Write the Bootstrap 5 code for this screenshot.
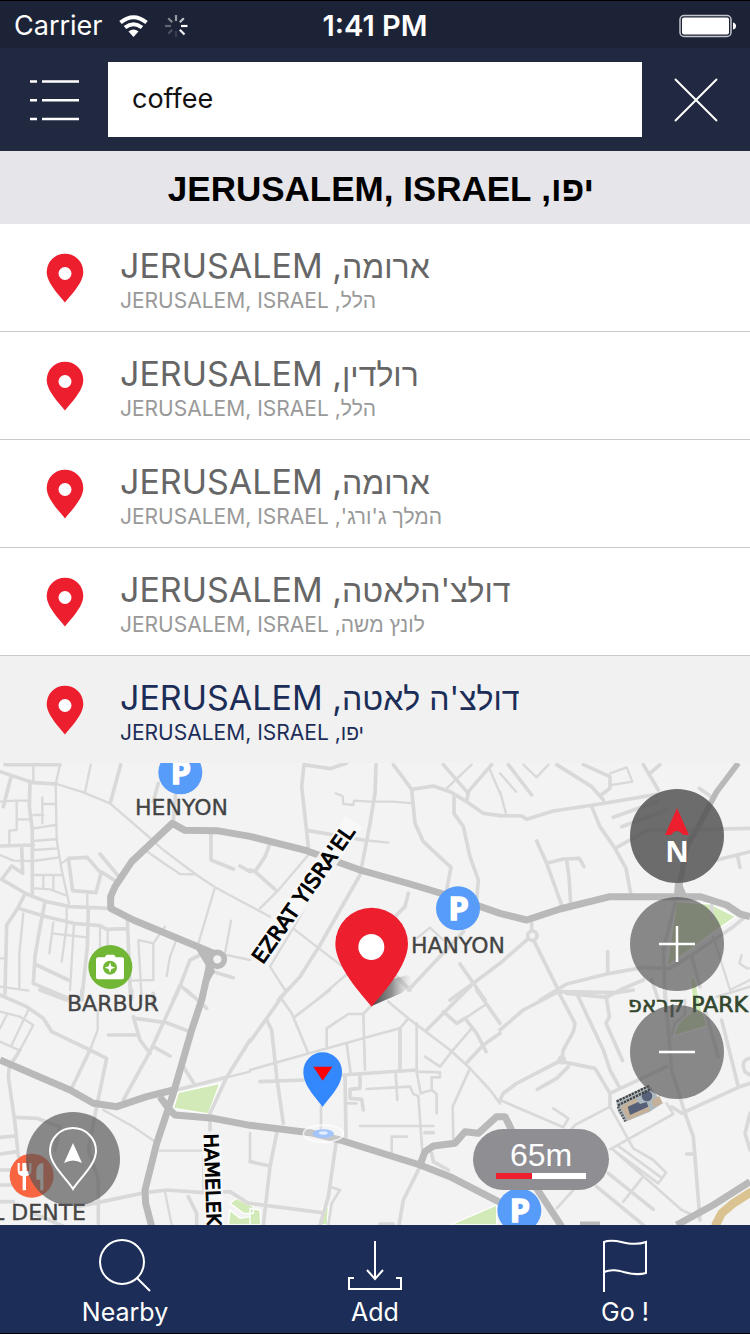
<!DOCTYPE html>
<html lang="en">
<head>
<meta charset="utf-8">
<meta name="viewport" content="width=device-width, initial-scale=1">
<title>Coffee – Jerusalem</title>
<link href="https://cdn.jsdelivr.net/npm/bootstrap@5.3.0/dist/css/bootstrap.min.css" rel="stylesheet">
<style>
  body { font-family: Inter, "Liberation Sans", sans-serif; background: #f3f3f3; }
  svg { display: block; }
  .status-bar { background: #1c2336; border-top: 1px solid #000; height: 48px; padding: 2px 14px 0; font-size: 27px; line-height: 32px; color: #fff; }
  .status-time { font-size: 29px; font-weight: 600; }
  .search-bar { background: #20293f; padding: 14px 0; }
  .bar-btn { flex: 0 0 108px; border: 0; background: none; color: #fff; padding: 0; display: flex; align-items: center; justify-content: center; }
  .search-input { height: 75px; border: 0; border-radius: 0; font-size: 27px; padding: 0 24px 2px; color: #111; }
  .place-heading { background: #e6e5ea; height: 73px; font: 700 35px/75px "Liberation Sans", sans-serif; color: #000; padding-left: 12px; }
  .result { display: flex; align-items: center; height: 108px; padding: 0 46px; border: 0; border-bottom: 1px solid #c9c9c9; text-align: left; }
  .result:last-child { border-bottom: 0; height: 107px; }
  .result svg { flex: none; margin-right: 36px; }
  .result-text { padding-top: 6px; }
  .result-title { font-size: 34px; line-height: 40px; color: #666; text-align: left; }
  .result-title bdi { font-size: 32px; }
  .result-sub { font-size: 21px; line-height: 28px; color: #999; text-align: left; }
  .result.selected { background: #f1f1f1; }
  .result.selected .result-title, .result.selected .result-sub { color: #1c2d58; }
  .map-area { flex: 1 0 462px; overflow: hidden; }
  .map-canvas { position: absolute; inset: 0; width: 100%; height: 100%; }
  .map-label { font-family: "DejaVu Sans", sans-serif; font-size: 66px; fill: #444; stroke: #444; stroke-width: 1px; }
  .park-label { fill: #33472f; stroke: #33472f; stroke-width: 2px; }
  .road-label { font-family: "DejaVu Sans", sans-serif; fill: #000; stroke: #000; stroke-width: 3px; }
  .road-halo { stroke: #f8f8f8; stroke-width: 17px; stroke-linejoin: round; }
  .map-p { font: 700 98px "Noto Sans", sans-serif; fill: #fff; stroke: #fff; stroke-width: 4px; text-anchor: middle; }
  .map-tools { position: absolute; top: 26px; right: 26px; display: flex; flex-direction: column; gap: 14px; }
  .round-btn { width: 94px; height: 94px; border: 0; border-radius: 50%; padding: 0; background: rgba(85,85,85,.68); color: #fff; }
  .north-btn { background: rgba(85,85,85,.86); font: 700 29px/29px "Noto Sans", sans-serif; }
  .locate-btn { position: absolute; left: 26px; bottom: 19px; }
  .scale-pill { position: absolute; right: 141px; bottom: 35px; width: 136px; height: 61px; border-radius: 31px; background: #8f8e93; color: #fff; font: 32px/36px "Liberation Sans", sans-serif; padding-top: 8px; text-align: center; }
  .scale-line { width: 90px; height: 6px; margin: 0 auto; background: #fff; }
  .scale-line span { display: block; width: 40%; height: 6px; background: #ed1f2f; }
  .tab-bar { background: #1c2d58; height: 109px; border-bottom: 1px solid #000; }
  .tab-bar a { color: #fff; text-decoration: none; font-size: 25px; line-height: 30px; padding-top: 13px; }
  .tab-bar svg { margin: 0 auto 5px; }
</style>
</head>
<body class="min-vh-100 d-flex flex-column">
<svg width="0" height="0" class="position-absolute" aria-hidden="true">
  <symbol id="pin" viewBox="0 0 38 50"><path d="M19 49.500C14 43 .700 30 .700 19A18.300 18.300 0 0 1 37.300 19C37.300 30 24 43 19 49.500Z" fill="#ed1f2f"/><circle cx="19" cy="20.500" r="6.500" fill="#fff"/></symbol>
</svg>

<header>
  <div class="status-bar row g-0 align-items-center flex-nowrap">
    <div class="col d-flex align-items-center">
      <span>Carrier</span>
      <svg class="ms-3" width="29" height="22" viewBox="0 0 29 22" fill="none" stroke="#fff" stroke-width="4"><path d="M1.500 7.500Q14.500-3 27.500 7.500M6 12.500Q14.500 6 23 12.500"/><path d="M14.500 22L9.500 16.500Q14.500 12.500 19.500 16.500Z" fill="#fff" stroke="none"/></svg>
      <svg class="ms-3" width="24" height="24" viewBox="-12 -12 24 24" stroke="#fff" stroke-width="2.200"><path d="M0-11V-5" opacity=".55"/><path d="M7.800-7.800L3.800-3.800" opacity=".75"/><path d="M5 0H11.500"/><path d="M3.800 3.800L8.500 8.500" opacity=".95"/><path d="M0 5V11" opacity=".12"/><path d="M-3.800 3.800L-7.800 7.800" opacity=".2"/><path d="M-5 0H-11" opacity=".3"/><path d="M-3.800-3.800L-7.800-7.800" opacity=".45"/></svg>
    </div>
    <div class="col-auto status-time">1:41 PM</div>
    <div class="col d-flex justify-content-end">
      <svg width="58" height="24" viewBox="0 0 58 24"><rect x="2" y="1.500" width="51" height="21" rx="4" fill="none" stroke="#c3c6cc" stroke-width="1.500"/><rect x="4" y="3.500" width="47" height="17" rx="2" fill="#fff"/><path d="M55 8.500Q58 9 58 12T55 15.500Z" fill="#fff"/></svg>
    </div>
  </div>
  <form class="search-bar d-flex">
    <button type="button" class="bar-btn" aria-label="Menu"><svg width="50" height="42" viewBox="0 0 50 42" stroke="#fff" stroke-width="2.400"><path d="M1 2.500H8M13 2.500H50M1 21.200H8M13 21.200H50M1 40H8M13 40H50"/></svg></button>
    <input class="form-control search-input" type="text" value="coffee" aria-label="Search">
    <button type="button" class="bar-btn" aria-label="Clear search"><svg width="44" height="44" viewBox="0 0 44 44" stroke="#fff" stroke-width="2"><path d="M1 1L43 43M43 1L1 43"/></svg></button>
  </form>
</header>

<main class="d-flex flex-column flex-grow-1">
  <h1 class="place-heading m-0 text-center" dir="rtl">יפו, JERUSALEM, ISRAEL</h1>
  <div class="list-group list-group-flush">
    <a href="#" class="result list-group-item"><svg width="38" height="50"><use href="#pin"/></svg><div class="result-text"><div class="result-title" dir="rtl"><bdi>ארומה</bdi>, JERUSALEM</div><div class="result-sub" dir="rtl">הלל, JERUSALEM, ISRAEL</div></div></a>
    <a href="#" class="result list-group-item"><svg width="38" height="50"><use href="#pin"/></svg><div class="result-text"><div class="result-title" dir="rtl"><bdi>רולדין</bdi>, JERUSALEM</div><div class="result-sub" dir="rtl">הלל, JERUSALEM, ISRAEL</div></div></a>
    <a href="#" class="result list-group-item"><svg width="38" height="50"><use href="#pin"/></svg><div class="result-text"><div class="result-title" dir="rtl"><bdi>ארומה</bdi>, JERUSALEM</div><div class="result-sub" dir="rtl">המלך ג'ורג', JERUSALEM, ISRAEL</div></div></a>
    <a href="#" class="result list-group-item"><svg width="38" height="50"><use href="#pin"/></svg><div class="result-text"><div class="result-title" dir="rtl"><bdi>דולצ'הלאטה</bdi>, JERUSALEM</div><div class="result-sub" dir="rtl">לונץ משה, JERUSALEM, ISRAEL</div></div></a>
    <a href="#" class="result list-group-item selected"><svg width="38" height="50"><use href="#pin"/></svg><div class="result-text"><div class="result-title" dir="rtl"><bdi>דולצ'ה לאטה</bdi>, JERUSALEM</div><div class="result-sub" dir="rtl">יפו, JERUSALEM, ISRAEL</div></div></a>
  </div>

  <section class="map-area position-relative" aria-label="Map">
    <svg class="map-canvas" viewBox="0 0 2250 1386" preserveAspectRatio="xMidYMid slice">
      <defs><linearGradient id="shade" x1="0" y1="0" x2="1" y2="0"><stop offset="0" stop-color="#444"/><stop offset=".5" stop-color="#777" stop-opacity=".8"/><stop offset="1" stop-color="#bbb" stop-opacity="0"/></linearGradient></defs>
      <rect width="2250" height="1386" fill="#f3f3f3"/>
      <!-- parks -->
      <g fill="#d2eab8" stroke="#fff" stroke-width="4">
        <path d="M2030 416L2130 423L2208 461L2150 501L2000 611Z"/>
        <path d="M2070 651L2085 641L2105 741L2122 789L2020 819L2035 781L2080 741Z"/>
        <path d="M535 988L660 961L625 1053L520 1036Z"/>
        <path d="M690 1321L710 1306L760 1330V1351H730ZM690 1341L720 1366L750 1361V1386H685ZM750 1336L780 1341L783 1386H750ZM968 1331H985L982 1386H960ZM1350 1386L1490 1326V1386Z"/>
      </g>
      <!-- side streets -->
      <g fill="none" stroke="#d9d9d9" stroke-width="11" stroke-linejoin="round" stroke-linecap="round">
        <g transform="translate(0 -9)">
          <path d="M0 35L100 68L170 72M15 14H180M32 55L10 140M90 68L88 140L97 210V400M0 258L100 255M65 262L68 340L35 318L5 358L80 402L140 425L210 440L330 445M205 295L262 292L303 340L288 398L218 392ZM300 282L355 348M303 335L350 365M362 14L332 125M475 70L460 125M527 100L520 180M633 220V300L700 327M720 318L750 335M75 402L50 450L20 495L15 700M135 425L115 530L105 590L100 670L205 715M110 615L205 660M265 450L262 560L245 720M600 585L570 600L545 665L520 720M545 680L575 705M640 635L700 653M460 700V740M382 480L392 720M55 445L130 468L220 490L300 497L320 508L380 506"/>
          <path stroke-width="7" d="M170 72L250 97L330 130L440 225L490 270L590 345L645 382L750 438M100 14V68M180 14L167 72L170 240L185 330L207 430M0 125L45 122H85M50 122V178H88M50 178V210L28 212V255M127 112V190M127 132H165M100 165H130M100 205L167 195M100 243L172 237M100 270L174 265M100 303L178 292M0 285L40 302L97 303M100 345H185M130 345V385M160 345V390M105 385L150 388L203 408M185 310L205 295M272 14L255 97M435 270L495 312L540 342L585 343M645 382L595 550M693 482L675 580M680 585L750 600M70 460L58 580V685M160 488L148 580M155 520L260 532M200 445V495L185 605M222 492L210 690M262 405V445M300 500V560M323 508V560M415 540L425 720M415 540L460 550V660L395 662M460 550L495 500M527 545L510 590L500 648M0 595H15M0 680L85 692"/>
        </g>
        <g transform="translate(750 -9)">
          <path d="M162 14L155 80L175 260M162 14L240 26L290 9M175 212L340 240M378 14L375 100L360 190L330 345L210 555L150 650L85 720M430 14L485 88L495 190L520 245L603 322L590 390M485 88L550 78L600 95L650 125L700 160L750 167M580 14L655 100M725 14L655 95L650 125M612 110V160L640 200L660 290L685 360L680 420M475 400L465 440L430 475M60 250L45 290L15 335L75 388M0 330L15 335M640 515L475 690M440 650L480 690M630 612L705 720M750 610L670 670L600 720"/>
          <path stroke-width="7" d="M340 240L415 248M257 100L278 108L280 132L310 135L312 122L360 125H430L490 130M590 85L665 14M720 30L750 100M175 285L90 385L30 445M0 438L60 470M110 490L200 560L285 625M300 635L200 720M220 350L120 520L90 570L60 620L105 690M500 535L540 503L580 540"/>
        </g>
        <g transform="translate(1500 -9)">
          <path d="M0 167L65 168L80 178L160 153L300 132L470 103M25 14L95 105M170 14L275 80L310 120M250 14L330 50V85L303 105M430 14L475 90M450 40L480 14M275 140L300 200L345 265L378 325L392 400M345 265L440 212L750 205M340 172L470 125M365 200L500 150M598 85L640 115M650 300L750 275M712 285L720 322M110 243L140 310L185 435M140 310L190 297L238 295L252 320M200 300L207 350L212 430M95 490V510M80 540L0 610M103 545L180 700M323 575V635M120 720L200 672L330 640L430 622L510 625L560 595L700 500L730 475M200 700L320 712L360 690L430 660M455 660L475 720M525 430L490 570L495 720M575 590L600 680M635 435V475"/>
          <circle cx="97" cy="527" r="14"/>
          <path stroke-width="7" d="M0 40L48 95M70 14L110 52L145 14M0 95L18 160M330 40L380 22L397 65L335 75M640 530L690 690M725 585L718 610L740 625H750M750 660L690 690"/>
        </g>
        <g transform="translate(0 681)">
          <path d="M0 15L80 50L130 85L155 125L270 180L320 205L290 350L265 480L295 570V700M100 670L205 715M120 0L200 30M270 180L215 295M60 180L28 230L25 260L45 400L55 500M325 135H415M400 80L420 150L450 190M405 85L500 98L570 125M535 0L450 185L370 330M460 170L510 198M395 0V25M560 0L620 55M550 230L585 285M530 300L680 262M750 150L680 262L630 370V420M50 382L110 385L180 410L165 480M0 442L45 438M0 492L50 485M0 540H40M0 585H40M0 635H40M235 650L435 608L500 600L610 608L690 605L745 640M565 620L590 670V705M245 0V30"/>
          <path stroke-width="7" d="M293 60V120L270 180M0 65L60 80L100 105L60 180M0 155L60 182M85 60L35 165M20 75L0 115M680 262L750 245M310 360L400 410L470 458M480 482H605M495 605L515 705M610 500V600"/>
        </g>
        <g transform="translate(750 681)">
          <path d="M110 0L50 85L0 155M50 90L65 120L80 260L100 400M450 115V240M30 275L160 270M275 255L500 240M285 255L288 440M530 120L660-10M580 65L620 100L645 85L680 130L708 185M680 0L750 100M750 130L700 165L650 218M330 255V295L300 298V325L335 328L340 360M525 428H550M545 490L550 515L595 540M510 530L460 630L447 705M258 460L235 620L210 705M80 430L60 530L40 705M0 515L60 528M0 640L215 668M390 702H430"/>
          <path stroke-width="8" d="M90 20L125 70L175 190M240 0L135 80M0 240L140 200L340 145L450 115L475 85M230 170V115L295 72H340L365 45M340 75L345 240M500 100V250M290 160L302 250M500 245L570 247V262H545V300L560 312V370M415 35L475 85L600 180L660 235L720 300L750 340M660 235L608 350L610 450M645 85L705 45M665 115L605 185L570 230L525 200M290 340H320M350 297L480 290L490 312L505 318L518 500M500 245L512 310L545 300M437 250L442 330M330 408H550M425 490V440H470M0 430V515M240 590L270 600L245 640L235 705M213 350V420"/>
        </g>
        <g transform="translate(1500 681)">
          <path d="M0 120L70 60L175 5L350 8L400 0M175 5L225 100L220 125L190 180L185 210L50 280L10 310L0 330M185 215L285 235L330 310V350M205 230L170 265L112 298M230 10L310 180L330 240L360 295M318 15L328 80L318 100L368 212M330 310L500 230M515 350L545 370L720 290L750 280M665 90L715 290M495 0L515 240L555 370L580 440L600 690M615 60L655 200M750 370L735 430L750 480M560 492H585M325 550L460 658M290 590L430 705M750 205Q720 210 735 245L750 255"/>
          <circle cx="185" cy="210" r="8"/>
          <path stroke-width="8" d="M0 330L190 412L205 385L160 355M330 350L225 405L190 445M330 350L400 475L460 510L498 548L475 580L340 480M355 468L480 560M330 478L520 372L500 340M340 480L460 585L545 660L590 680M425 565L370 635M220 600L170 655M650 20L750-10M515 135L525 100L555 75V30"/>
        </g>
      </g>
      <!-- main roads -->
      <g fill="none" stroke="#b9b9b9" stroke-width="21" stroke-linejoin="round">
        <path d="M630 566L400 471L332 436V401L345 371L395 296L517 181L555 202L650 203L750 220L920 263L1080 321L1230 363L1350 399L1500 451L1580 471L1680 438L1830 401H2100L2180 426L2220 453L2250 461"/>
        <path stroke-width="17" d="M2215 0L2150 86L2100 181L2060 251L2035 391"/>
        <path d="M630 601L605 711L575 801L520 991L470 1141L435 1281L437 1321L455 1390M0 891L210 981L280 1021L350 1031L440 1001L520 981M480 1001L505 1036L525 1056L640 1066L750 1087L930 1109L1020 1131L1260 1206L1350 1241L1500 1318"/>
        <path d="M1260 1206L1275 1166L1300 1149L1365 1141L1395 1106L1435 1111L1490 1061H1515L1530 1091L1600 1261L1685 1390M2030 1386L2140 1326L2250 1256M1740 1386H1800"/>
        <circle cx="652" cy="589" r="21" stroke-width="17"/>
        <path d="M580 545L645 560L632 590L645 625L625 660L616 605Z" fill="#b9b9b9" stroke="none"/>
        <path d="M2022 395L2025 360H2045L2060 395Z" fill="#b9b9b9" stroke="none"/>
        <path stroke="#dac391" stroke-width="26" d="M2145 1390L2165 1351L2200 1321L2255 1286"/>
      </g>
      <!-- landmark building -->
      <g transform="translate(1500 681)">
        <path d="M348 332L447 284L462 305L488 340L448 366L375 396L354 365Z" fill="#aeb9bf"/>
        <path d="M362 350L408 324L415 345L445 345L450 362L385 390Z" fill="#c5b199"/><path d="M455 330L478 318L488 340L462 352Z" fill="#c5b199"/>
        <path d="M383 350L415 336L420 342L440 336L445 350L390 375Z" fill="#566079"/><circle cx="441" cy="318" r="16" fill="#566079"/>
        <path d="M350 334L447 288M354 346L450 298" stroke="#444" stroke-width="7" stroke-dasharray="7 3"/><path d="M354 350L376 394" stroke="#555" stroke-width="8" stroke-dasharray="5 4"/>
      </g>
      <!-- points of interest -->
      <g fill="#579cf9"><circle cx="541" cy="28" r="66"/><circle cx="1374" cy="436" r="66"/><circle cx="1558" cy="1342" r="66"/></g>
      <text class="map-p" x="543" y="64">P</text><text class="map-p" x="1376" y="472">P</text><text class="map-p" x="1560" y="1378">P</text>
      <circle cx="331" cy="612" r="66" fill="#72b636"/>
      <path d="M294 583H314L320 575H342L348 583H366Q372 583 372 589V643Q372 649 366 649H294Q288 649 288 643V589Q288 583 294 583Z" fill="#fff"/>
      <circle cx="330" cy="614" r="21" fill="#72b636"/><path d="M330 598L334 610L346 614L334 618L330 630L326 618L314 614L326 610Z" fill="#fff"/>
      <circle cx="95" cy="1238" r="66" fill="#fa6541"/>
      <path d="M53 1200V1222Q53 1238 68 1240V1282H78V1240Q94 1238 94 1222V1200H88V1224H80V1200H67V1224H59V1200ZM130 1200V1282H121V1250H109V1222Q112 1200 130 1200Z" fill="#fff"/>
      <text class="map-label" x="405" y="157">HENYON</text>
      <text class="map-label" x="1233" y="569">HANYON</text>
      <text class="map-label" x="201" y="745">BARBUR</text>
      <text class="map-label" x="258" y="1371" text-anchor="end">AL DENTE</text>
      <text class="map-label park-label" x="2244" y="748" text-anchor="end">קראפ PARK</text>
      <g font-size="62" transform="translate(788 606) rotate(-55)"><path class="road-halo" d="M10-22H510" style="stroke-width:62px;stroke-opacity:.85"/><text class="road-label">EZRAT YISRA'EL</text></g>
      <g font-size="58" transform="translate(612 1112) rotate(88)"><path class="road-halo" d="M8-22H300" style="stroke-width:58px;stroke-opacity:.85"/><text class="road-label">HAMELEKH</text></g>
      <!-- markers -->
      <path d="M1115 729L1170 650L1225 635Q1255 655 1205 690Z" fill="url(#shade)"/>
      <path d="M1115 731C1085 695 1006 610 1006 543A109 109 0 0 1 1224 543C1224 610 1145 695 1115 731Z" fill="#ed1f2f"/><circle cx="1114" cy="552" r="39" fill="#fff"/>
      <ellipse cx="970" cy="1112" rx="60" ry="26" fill="#fff" fill-opacity=".2" stroke="#fff" stroke-opacity=".7" stroke-width="5"/>
      <ellipse cx="970" cy="1112" rx="32" ry="13" fill="#a3c5fb"/><ellipse cx="970" cy="1110" rx="13" ry="5" fill="#e4effe"/>
      <path d="M968 1032C950 1005 910 970 910 926A58 58 0 0 1 1026 926C1026 970 986 1005 968 1032Z" fill="#3488fd"/><path d="M940 911H997L968 953Z" fill="#fb0207"/>
    </svg>

    <div class="map-tools">
      <button type="button" class="round-btn north-btn"><svg class="mx-auto" width="24" height="28" viewBox="0 0 24 28"><path d="M12 0L24 27H18Q15 23 12 23T6 27H0Z" fill="#ed1f2f"/></svg>N</button>
      <button type="button" class="round-btn" aria-label="Zoom in"><svg class="mx-auto" width="36" height="36" stroke="#fff" stroke-width="2.500"><path d="M0 18H36M18 0V36"/></svg></button>
      <button type="button" class="round-btn" aria-label="Zoom out"><svg class="mx-auto" width="36" height="36" stroke="#fff" stroke-width="2.500"><path d="M0 18H36"/></svg></button>
    </div>
    <button type="button" class="round-btn locate-btn" aria-label="My location"><svg class="mx-auto" width="48" height="64" viewBox="0 0 48 64"><path d="M24 62C18 52 1 38 1 24A23 23 0 0 1 47 24C47 38 30 52 24 62Z" fill="none" stroke="#fff" stroke-width="2"/><path d="M24 16L33 36Q24 31 15 36Z" fill="#fff"/></svg></button>
    <div class="scale-pill">65m<div class="scale-line"><span></span></div></div>
  </section>
</main>

<nav class="tab-bar row g-0 text-center">
  <a href="#" class="col"><svg width="52" height="54" viewBox="0 0 52 54" fill="none" stroke="#fff" stroke-width="2"><circle cx="23" cy="24" r="22"/><path d="M38 40L51 53"/></svg>Nearby</a>
  <a href="#" class="col"><svg width="54" height="54" viewBox="0 0 54 54" fill="none" stroke="#fff" stroke-width="2"><path d="M27 3V41M19 32L27 41L35 32M6 40H1V51H53V40H48"/></svg>Add</a>
  <a href="#" class="col"><svg width="44" height="54" viewBox="0 0 44 54" fill="none" stroke="#fff" stroke-width="2"><path d="M1 54V4C14-1 26 10 43 4V35C26 40 16 28 1 34"/></svg>Go !</a>
</nav>
<script src="https://cdn.jsdelivr.net/npm/bootstrap@5.3.0/dist/js/bootstrap.bundle.min.js"></script>
</body>
</html>
